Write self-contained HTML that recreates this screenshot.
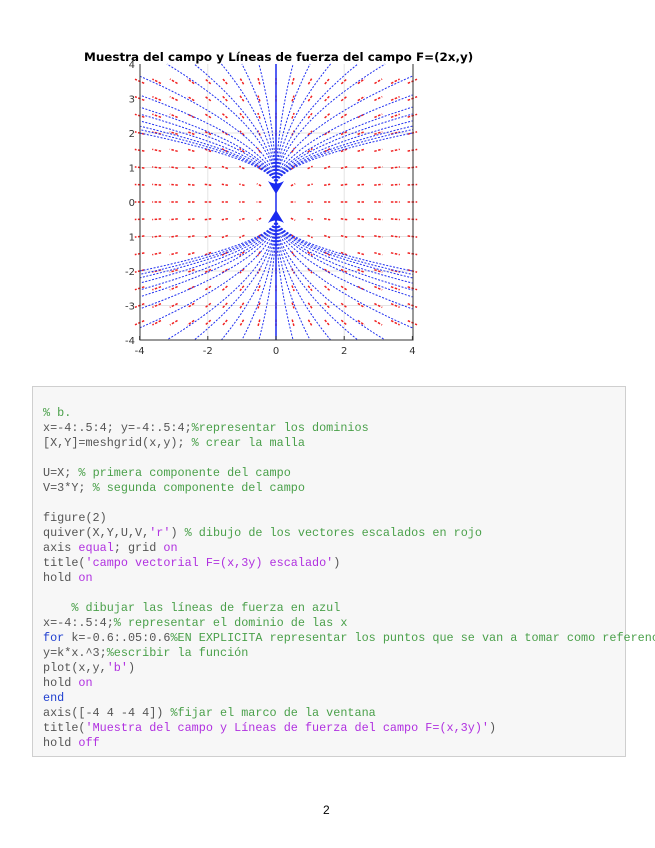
<!DOCTYPE html>
<html><head><meta charset="utf-8"><style>
body{margin:0;width:655px;height:848px;background:#fff;position:relative;overflow:hidden;font-family:"Liberation Sans",sans-serif}
#title{position:absolute;left:84px;top:50px;font-family:"DejaVu Sans",sans-serif;font-size:11.9px;font-weight:bold;color:#000;white-space:nowrap}
.code{position:absolute;left:32px;top:386px;width:592px;height:369px;background:#f7f7f7;border:1px solid #cfcfcf}
pre{position:absolute;left:43px;top:406px;margin:0;font-family:"Liberation Mono",monospace;font-size:11.8px;line-height:15px;color:#555;white-space:pre}
.c{color:#4aa04a}.s{color:#b030e0}.k{color:#2040d0}
#pg{position:absolute;left:323px;top:803px;font-size:12px;color:#000}
</style></head><body>
<svg id="plt" width="655" height="380" style="position:absolute;left:0;top:0" font-family="DejaVu Sans" font-size="10" fill="#333"></svg>
<div id="title">Muestra del campo y Líneas de fuerza del campo F=(2x,y)</div>
<div class="code"></div>
<pre><span class="c">% b.</span>
x=-4:.5:4; y=-4:.5:4;<span class="c">%representar los dominios</span>
[X,Y]=meshgrid(x,y); <span class="c">% crear la malla</span>

U=X; <span class="c">% primera componente del campo</span>
V=3*Y; <span class="c">% segunda componente del campo</span>

figure(2)
quiver(X,Y,U,V,<span class="s">'r'</span>) <span class="c">% dibujo de los vectores escalados en rojo</span>
axis <span class="s">equal</span>; grid <span class="s">on</span>
title(<span class="s">'campo vectorial F=(x,3y) escalado'</span>)
hold <span class="s">on</span>

    <span class="c">% dibujar las líneas de fuerza en azul</span>
x=-4:.5:4;<span class="c">% representar el dominio de las x</span>
<span class="k">for</span> k=-0.6:.05:0.6<span class="c">%EN EXPLICITA representar los puntos que se van a tomar como referencia</span>
y=k*x.^3;<span class="c">%escribir la función</span>
plot(x,y,<span class="s">'b'</span>)
hold <span class="s">on</span>
<span class="k">end</span>
axis([-4 4 -4 4]) <span class="c">%fijar el marco de la ventana</span>
title(<span class="s">'Muestra del campo y Líneas de fuerza del campo F=(x,3y)'</span>)
hold <span class="s">off</span></pre>
<div id="pg">2</div>
<script>
var s=document.getElementById('plt'),h='';
function X(x){return 276+x*34.1}function Y(y){return 202-y*34.5}
[2,-2].forEach(function(v){h+='<line x1="'+X(v)+'" y1="64" x2="'+X(v)+'" y2="340" stroke="#e4e4e4"/>';});
[2,1,-1,-2,-3].forEach(function(v){h+='<line x1="140" y1="'+Y(v)+'" x2="413" y2="'+Y(v)+'" stroke="#e4e4e4"/>';});
for(var i=-8;i<=8;i++)for(var j=-7;j<=7;j++){var x=i/2,y=j/2;var u=2*x,v=y,m=Math.sqrt(u*u+v*v);if(!m)continue;var L=Math.min(10,4+m*0.7);
var x1=X(x)-u/m*L/2,y1=Y(y)+v/m*L/2,x2=x1+u/m*L,y2=y1-v/m*L;h+='<line x1="'+x1.toFixed(1)+'" y1="'+y1.toFixed(1)+'" x2="'+x2.toFixed(1)+'" y2="'+y2.toFixed(1)+'" stroke="#f02020" stroke-width="1.5" stroke-dasharray="2.5 1.5"/>';}
var ends=[[-4,2.0],[-4,2.1],[-4,2.2],[-4,2.35],[-4,2.55],[-4,2.75],[-4,3.1],[-4,3.65],[-3.2,4],[-2.4,4],[-1.6,4],[-1.0,4],[-0.5,4]];
[1,-1].forEach(function(sx){[1,-1].forEach(function(sy){ends.forEach(function(e){var ex=Math.abs(e[0]),ey=e[1];var p=0.55,A=(ey-0.5)/Math.pow(ex,p);var d='';
for(var t=0;t<=40;t++){var ax=ex*Math.pow(t/40,1.6);var ay=0.5+A*Math.pow(ax,p);d+=(t?'L':'M')+X(sx*ax).toFixed(1)+' '+Y(sy*ay).toFixed(1);}
h+='<path d="'+d+'" fill="none" stroke="#2030f0" stroke-width="1" stroke-dasharray="2 1.5"/>';});});});
h+='<path d="M268 181 Q276 186 284 181 L276 194Z M268 223 Q276 218 284 223 L276 210Z" fill="#1a2af0"/>';
h+='<line x1="276" y1="64" x2="276" y2="340" stroke="#1a2af0" stroke-width="1.5"/>';
h+='<path d="M140 64 V340 H413 V64" fill="none" stroke="#333"/>';
[-4,-2,0,2,4].forEach(function(v){h+='<line x1="'+X(v)+'" y1="340" x2="'+X(v)+'" y2="336" stroke="#333"/><text x="'+X(v)+'" y="354" text-anchor="middle">'+v+'</text>';});
[[4,'4'],[3,'3'],[2,'2'],[1,'1'],[0,'0'],[-1,'1'],[-2,'-2'],[-3,'-3'],[-4,'-4']].forEach(function(a){h+='<text x="135" y="'+(Y(a[0])+4)+'" text-anchor="end">'+a[1]+'</text>';});
s.innerHTML=h;
</script>
</body></html>
